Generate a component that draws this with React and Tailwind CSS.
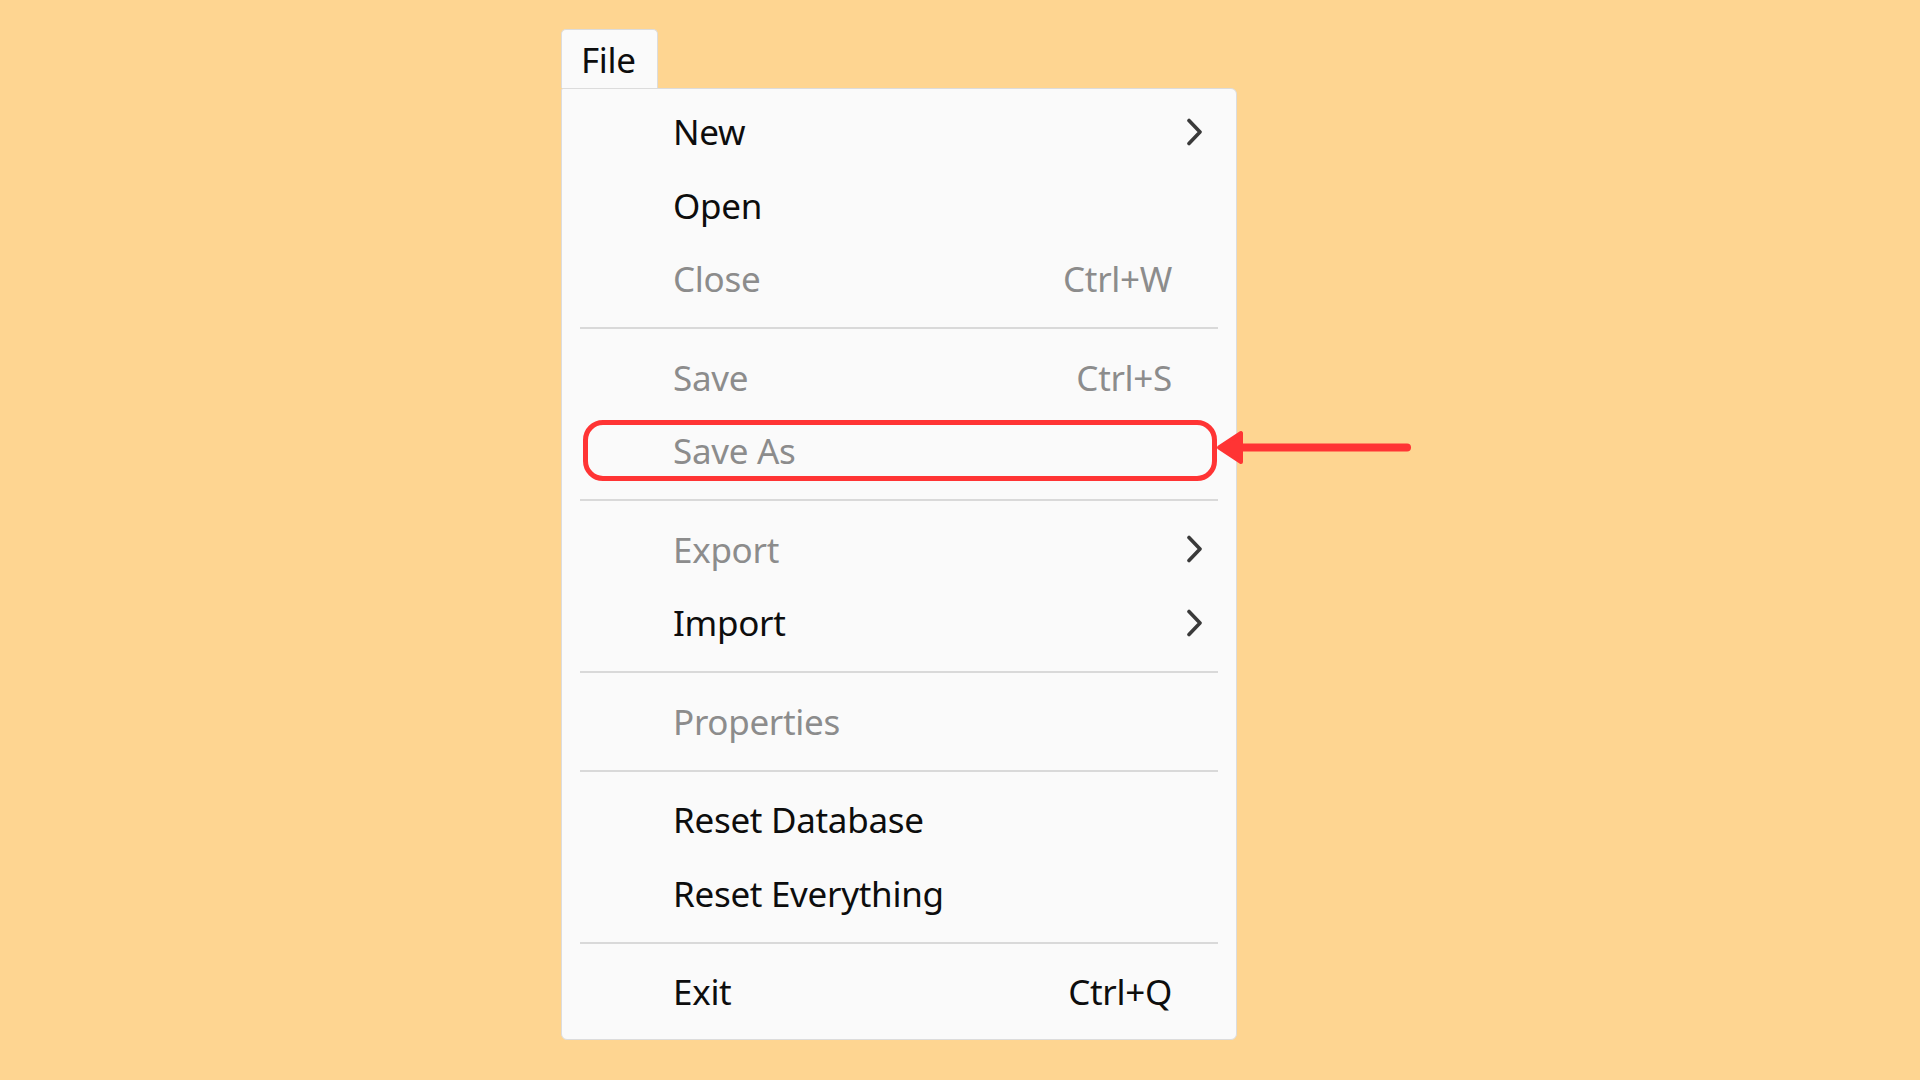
const items = [
  { label: "New", sub: true },
  { label: "Open" },
  { label: "Close", key: "Ctrl+W", off: true },
  "sep",
  { label: "Save", key: "Ctrl+S", off: true },
  { label: "Save As", off: true, marked: true },
  "sep",
  { label: "Export", sub: true, off: true },
  { label: "Import", sub: true },
  "sep",
  { label: "Properties", off: true },
  "sep",
  { label: "Reset Database" },
  { label: "Reset Everything" },
  "sep",
  { label: "Exit", key: "Ctrl+Q" },
];

const Chevron = () => (
  <svg width="16" height="28" viewBox="0 0 16 28" fill="none">
    <path
      d="M3 2.5 L14 14 L3 25.5"
      stroke="#3a3a3a"
      strokeWidth="3.6"
      strokeLinecap="round"
      strokeLinejoin="round"
    />
  </svg>
);

const MenuRow = ({ item }) => (
  <div className="relative flex items-center h-[73.5px] pl-[111px] pr-[34px]">
    <span
      className={`flex-1 text-[35px] leading-none tracking-[-0.3px] ${
        item.off ? "text-[#8c8c8c]" : "text-[#0d0d0d]"
      }`}
    >
      {item.label}
    </span>
    {item.key && (
      <span
        className={`mr-[30px] text-[35px] leading-none tracking-[-0.3px] ${
          item.off ? "text-[#8c8c8c]" : "text-[#0d0d0d]"
        }`}
      >
        {item.key}
      </span>
    )}
    {item.sub && <Chevron />}

    {/* highlight ring */}
    {item.marked && (
      <div className="absolute left-[21px] right-[19px] top-[6px] bottom-[7px] rounded-[20px] border-[5px] border-[#ff3434]" />
    )}
  </div>
);

export default function App() {
  return (
    <div
      className="relative w-full h-screen overflow-hidden bg-[#fed591] pl-[561px] pt-[29px]"
      style={{ fontFamily: '"Noto Sans", "Open Sans", sans-serif' }}
    >
      {/* Menu bar tab */}
      <div className="w-[97px] h-[59px] flex items-center pl-[19px] bg-[#fafafa] border border-b-0 border-[#dcdcdc] rounded-t-[5px]">
        <span className="text-[35px] leading-none tracking-[-0.3px] text-[#0d0d0d]">File</span>
      </div>

      {/* Dropdown */}
      <div className="w-[676px] bg-[#fafafa] border border-[#dcdcdc] rounded-[6px] rounded-tl-[2px] pt-[6px] pb-[10px]">
        {items.map((item, i) =>
          item === "sep" ? (
            <div key={i} className="mx-[18px] my-[11.5px] h-[2px] bg-[#d9d9d9]" />
          ) : (
            <MenuRow key={i} item={item} />
          )
        )}
      </div>

      {/* Pointer arrow */}
      <svg
        className="absolute left-[1214px] top-[428px]"
        width="200"
        height="40"
        viewBox="0 0 200 40"
        fill="none"
      >
        <line x1="26" y1="19.5" x2="193" y2="19.5" stroke="#ff3434" strokeWidth="8" strokeLinecap="round" />
        <polygon
          points="5,19.5 27,5 27,34"
          fill="#ff3434"
          stroke="#ff3434"
          strokeWidth="4"
          strokeLinejoin="round"
        />
      </svg>
    </div>
  );
}
